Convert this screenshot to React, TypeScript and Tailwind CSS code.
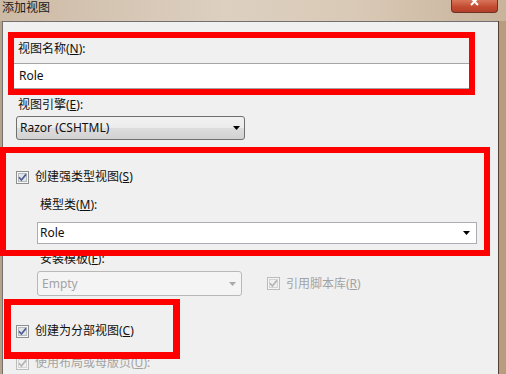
import React from 'react';

const CheckBox = ({ disabled = false }: { disabled?: boolean }) => (
    <svg width="13" height="13" viewBox="0 0 13 13" className="shrink-0">
        <rect x="0.5" y="0.5" width="12" height="12" fill={disabled ? '#f4f4f4' : '#f6f6f6'} stroke={disabled ? '#bcbcbc' : '#8e8f8f'} />
        <rect x="2.5" y="2.5" width="8" height="8" fill={disabled ? '#f0f0f0' : '#e2e4e8'} stroke={disabled ? '#d4d4d4' : '#b6bac0'} />
        <path d="M3 6.3 L5.4 9 L10 3.4" stroke={disabled ? '#b4b4b4' : '#4b5f96'} strokeWidth="1.7" fill="none" />
    </svg>
);

const Arrow = ({ color = '#000' }: { color?: string }) => (
    <svg width="7" height="4" viewBox="0 0 7 4">
        <path d="M0 0 H7 L3.5 4 Z" fill={color} />
    </svg>
);

const App = () => {
    return (
        <div className="relative w-[506px] h-[374px] overflow-hidden flex flex-col bg-[#bfa68b] font-['Noto_Sans','Noto_Sans_CJK_SC',sans-serif] text-[12px] leading-4 text-[#111]">
            {/* title bar */}
            <div className="h-[21px] shrink-0 flex justify-between bg-[linear-gradient(90deg,#cdbaa5,#ddd0c1_45%,#d9c9b6_70%,#c9b39b)]">
                <span className="pl-[2px] text-[#1a1a1a]">添加视图</span>
                <div className="mr-[8px] w-[47px] h-[13px] rounded-b-[4px] border border-t-0 border-[#6b3326] bg-[linear-gradient(#d8755a,#c24a30_60%,#b4402a)] flex justify-center overflow-hidden">
                    <svg width="9" height="9" viewBox="0 0 9 9" className="-mt-[3px]">
                        <path d="M1 1 L8 8 M8 1 L1 8" stroke="#fff" strokeWidth="2" />
                    </svg>
                </div>
            </div>

            <div className="flex flex-1">
                <div className="w-[2px] bg-[#b9a388]" />
                <div className="flex-1 flex flex-col bg-[#f0f0f0] border-l border-t border-[#707070] pt-[19px]">
                    <div className="ml-[15px]">视图名称(<u>N</u>):</div>
                    <div className="ml-[10px] mt-[6px] w-[460px] h-[26px] bg-white border border-[#a5a5a5] pl-[5px] flex items-center">Role</div>

                    <div className="ml-[15px] mt-[8px]">视图引擎(<u>E</u>):</div>
                    <div className="ml-[13px] mt-[3px] w-[229px] h-[24px] rounded-[3px] border border-[#707070] bg-[linear-gradient(#f2f2f2,#ebebeb_50%,#dddddd_50%,#d2d2d2)] pl-[3px] pr-[4px] flex items-center justify-between">
                        <span>Razor (CSHTML)</span>
                        <Arrow />
                    </div>

                    <div className="ml-[13px] mt-[29px] flex items-center gap-[6px]">
                        <CheckBox />
                        <span>创建强类型视图(<u>S</u>)</span>
                    </div>
                    <div className="ml-[37px] mt-[12px]">模型类(<u>M</u>):</div>
                    <div className="ml-[34px] mt-[9px] w-[440px] h-[22px] bg-white border border-[#abadb3] pl-[2px] pr-[6px] flex items-center justify-between">
                        <span>Role</span>
                        <Arrow />
                    </div>

                    <div className="ml-[37px] mt-[7px]">安装模板(<u>F</u>):</div>
                    <div className="ml-[34px] mt-[4px] flex items-center">
                        <div className="w-[205px] h-[25px] rounded-[3px] border border-[#b8b8b8] bg-[#f4f4f4] pl-[4px] pr-[5px] flex items-center justify-between text-[#a3a3a3]">
                            <span>Empty</span>
                            <Arrow color="#a8a8a8" />
                        </div>
                        <div className="ml-[25px] flex items-center gap-[6px] text-[#a3a3a3]">
                            <CheckBox disabled />
                            <span>引用脚本库(<u>R</u>)</span>
                        </div>
                    </div>

                    <div className="ml-[13px] mt-[27px] flex items-center gap-[6px]">
                        <CheckBox />
                        <span>创建为分部视图(<u>C</u>)</span>
                    </div>
                    <div className="ml-[13px] mt-[16px] flex items-center gap-[6px] text-[#a3a3a3]">
                        <CheckBox disabled />
                        <span>使用布局或母版页(<u>U</u>):</span>
                    </div>
                </div>
                <div className="w-[8px] border-l border-[#4e4136] bg-[#b99c7e]" />
            </div>

            {/* red annotation boxes */}
            <div className="absolute left-[8px] top-[32px] w-[467px] h-[63px] border-[6px] border-[#ff0000]" />
            <div className="absolute left-[0px] top-[147px] w-[490px] h-[109px] border-[6px] border-[#ff0000]" />
            <div className="absolute left-[4px] top-[299px] w-[176px] h-[60px] border-[7px] border-t-[6px] border-[#ff0000]" />
        </div>
    );
};

export default App;
